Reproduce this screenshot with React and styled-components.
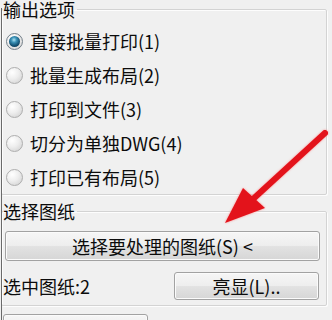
import React from "react";
import styled, { createGlobalStyle } from "styled-components";

const GlobalStyle = createGlobalStyle`
  html, body {
    margin: 0;
    padding: 0;
    background: #f0f0f0;
  }
  body {
    font-family: "Noto Sans CJK SC", "Noto Sans", sans-serif;
    color: #0c0c0c;
  }
`;

const Dialog = styled.div`
  position: relative;
  width: 332px;
  height: 320px;
  overflow: hidden;
  background: #f0f0f0;

  &::before {
    content: "";
    position: absolute;
    left: 1px;
    top: 8px;
    bottom: 0;
    width: 1px;
    background: #6a6a6a;
  }
`;

const Group = styled.fieldset`
  box-sizing: border-box;
  width: 326px;
  margin: ${(p) => p.$margin || "0"};
  padding: 0;
  border: 1px solid #d3d3d3;
  border-radius: 2px;
  box-shadow: 1px 1px 0 #fdfdfd, inset 1px 1px 0 #fdfdfd;
  min-width: 0;
`;

const Legend = styled.legend`
  margin-left: 1px;
  padding: 0 2px 0 0;
  font-size: 18px;
  line-height: 18px;
  height: 18px;
`;

const Options = styled.div`
  padding: 6px 0 0 4px;
`;

const OptionRow = styled.label`
  display: flex;
  align-items: center;
  gap: 7px;
  height: 34px;
  font-size: 18px;
  line-height: 20px;
`;

const Radio = styled.span`
  position: relative;
  flex: none;
  box-sizing: border-box;
  width: 17px;
  height: 17px;
  border-radius: 50%;
  border: 1px solid ${(p) => (p.$on ? "#737f89" : "#aeaeae")};
  background: radial-gradient(
    circle at 35% 30%,
    #ffffff 0,
    #eeeeee 45%,
    #cdcdcd 100%
  );

  &::after {
    content: "";
    display: ${(p) => (p.$on ? "block" : "none")};
    position: absolute;
    inset: 2px;
    border-radius: 50%;
    background: radial-gradient(
      circle at 45% 35%,
      #b0e4f4 0,
      #3c93b8 28%,
      #135274 62%,
      #0b2f45 100%
    );
  }
`;

const Body = styled.div`
  padding: 11px 6px 5px 3px;
`;

const PushButton = styled.button`
  display: flex;
  align-items: center;
  justify-content: center;
  box-sizing: border-box;
  width: ${(p) => (p.$w ? `${p.$w}px` : "100%")};
  height: ${(p) => p.$h}px;
  margin: ${(p) => p.$margin || "0"};
  padding: 0;
  border: 1px solid #a2a2a2;
  border-radius: 3px;
  background: linear-gradient(
    #f6f6f6 0%,
    #eeeeee 48%,
    #e2e2e2 52%,
    #d6d6d6 100%
  );
  box-shadow: inset 0 0 0 1px #fbfbfb;
  font-family: inherit;
  font-size: 18px;
  line-height: 20px;
  color: #0c0c0c;
`;

const InfoRow = styled.div`
  display: flex;
  align-items: center;
  justify-content: space-between;
  margin-top: 11px;
  padding-right: 1px;
`;

const InfoText = styled.span`
  margin-left: -2px;
  font-size: 18px;
  line-height: 20px;
`;

const Arrow = styled.svg`
  position: absolute;
  left: 0;
  top: 0;
  width: 332px;
  height: 320px;
  pointer-events: none;
  filter: drop-shadow(0 0 1px rgba(255, 120, 120, 0.8));
`;

const options = [
  "直接批量打印(1)",
  "批量生成布局(2)",
  "打印到文件(3)",
  "切分为单独DWG(4)",
  "打印已有布局(5)",
];

export default function App() {
  return (
    <>
      <GlobalStyle />
      <Dialog>
        <Group $margin="0 0 0 1px">
          <Legend>输出选项</Legend>
          <Options>
            {options.map((text, i) => (
              <OptionRow key={text}>
                <Radio $on={i === 0} />
                {text}
              </OptionRow>
            ))}
          </Options>
        </Group>

        <Group $margin="7px 0 0 1px">
          <Legend>选择图纸</Legend>
          <Body>
            <PushButton $h={30}>选择要处理的图纸(S) &lt;</PushButton>
            <InfoRow>
              <InfoText>选中图纸:2</InfoText>
              <PushButton $w={145} $h={28}>
                亮显(L)..
              </PushButton>
            </InfoRow>
          </Body>
        </Group>

        <PushButton $w={145} $h={28} $margin="8px 0 0 3px" aria-label="确定" />

        <Arrow viewBox="0 0 332 320">
          <line
            x1="325"
            y1="133"
            x2="252"
            y2="200"
            stroke="#e3131b"
            strokeWidth="6"
            strokeLinecap="round"
          />
          <polygon points="225,223 243,188 265,208" fill="#e3131b" />
        </Arrow>
      </Dialog>
    </>
  );
}
